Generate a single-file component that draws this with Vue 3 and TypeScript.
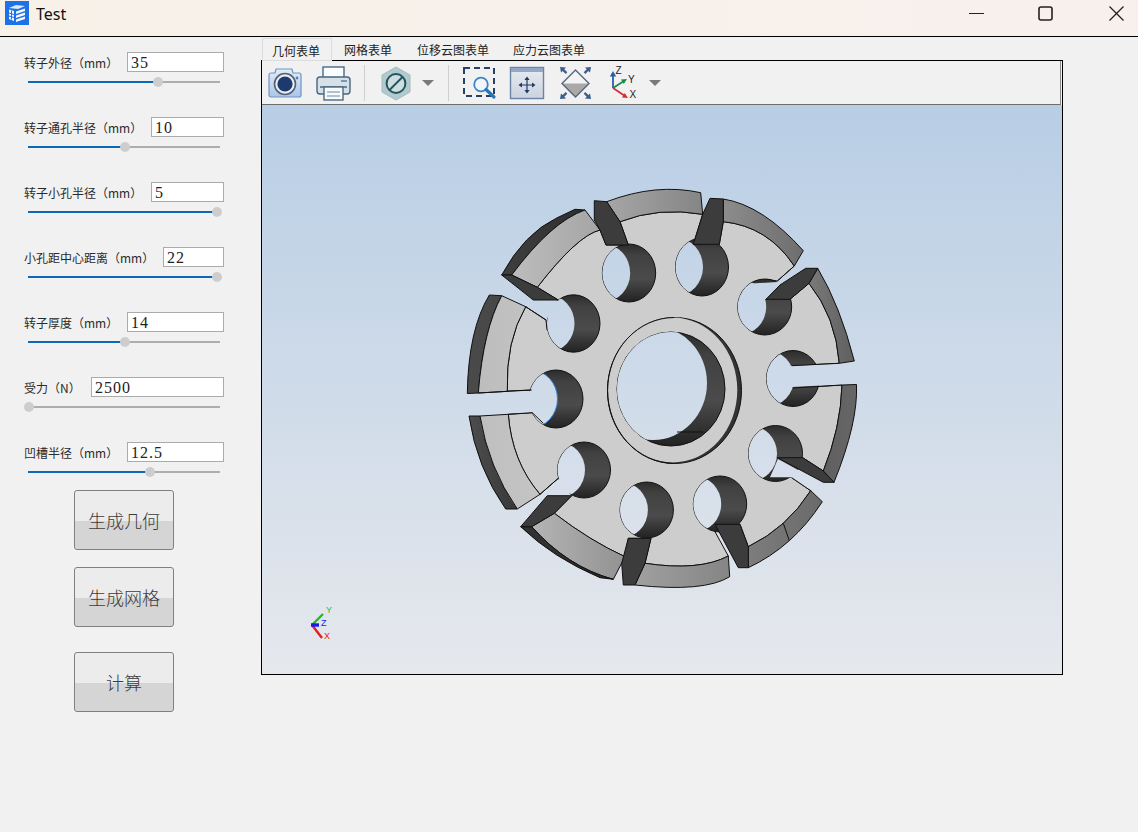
<script setup lang="ts">
type Seg = number[];
// A segment of two numbers is a straight line; of four numbers, a curve through (mx,my) to (x,y).
function shape(segs: Seg[], close = true): string {
  let d = `M${segs[0][0]} ${segs[0][1]}`;
  let cur = segs[0];
  for (const s of segs.slice(1)) {
    if (s.length === 2) {
      d += `L${s[0]} ${s[1]}`;
      cur = s;
    } else {
      const cx = 2 * s[0] - (cur[0] + s[2]) / 2;
      const cy = 2 * s[1] - (cur[1] + s[3]) / 2;
      d += `Q${cx.toFixed(1)} ${cy.toFixed(1)} ${s[2]} ${s[3]}`;
      cur = [s[2], s[3]];
    }
  }
  return d + (close ? "Z" : "");
}

const params = [
  { label: "转子外径（mm）", value: "35", inputWidth: 97, thumb: 130 },
  { label: "转子通孔半径（mm）", value: "10", inputWidth: 73, thumb: 97 },
  { label: "转子小孔半径（mm）", value: "5", inputWidth: 73, thumb: 189 },
  { label: "小孔距中心距离（mm）", value: "22", inputWidth: 61, thumb: 189 },
  { label: "转子厚度（mm）", value: "14", inputWidth: 97, thumb: 97 },
  { label: "受力（N）", value: "2500", inputWidth: 133, thumb: 1 },
  { label: "凹槽半径（mm）", value: "12.5", inputWidth: 97, thumb: 122 },
];

const buttons = [
  { text: "生成几何", cls: "b1" },
  { text: "生成网格", cls: "b2" },
  { text: "计算", cls: "b3" },
];

const tabs = ["几何表单", "网格表单", "位移云图表单", "应力云图表单"];

const face = shape([
  [620, 221.7], [660, 212.3, 702.7, 214.3], [693.3, 244.3], [702, 267], [719.3, 244.3], [723.3, 221.7],
  [763.3, 235, 794.3, 266], [777.3, 281], [766.7, 279.3], [764, 307], [790, 299.3], [809, 283.3],
  [830, 320, 839.3, 363.3], [791.7, 365.7], [793, 378], [793, 388], [842, 385],
  [836.7, 428, 823.3, 471], [802.7, 457.7], [777.3, 457.7], [775, 470], [791.7, 477.7], [810.7, 490.7],
  [783.3, 523.3, 748.3, 546.7], [740, 524.3], [715, 524.3], [715, 531.7], [728.3, 556],
  [693, 565.5, 645, 563.3], [651, 538.3], [628.3, 538.3], [625, 556.7], [590, 538, 554.3, 513.3],
  [571.7, 495.7], [575, 480], [558.3, 478.3], [540, 494.3], [518, 458, 508.3, 414.3], [532.3, 412.7],
  [543.3, 423.3], [556, 400], [531.7, 390], [507.3, 391], [511, 345, 525.7, 306.7], [546, 320], [547, 330],
  [574, 320], [558.3, 300], [537.3, 287.3], [573, 247, 600, 230], [606, 245], [628.3, 245],
]);

const bands = [
  { from: "#3f3f3f", to: "#2e2e2e", pts: [[501.7, 275], [526.7, 240, 556.7, 218], [575, 209.3], [585, 210], [550, 232, 511.7, 275]] },
  { from: "#bdbdbd", to: "#a5a5a5", pts: [[585, 210], [600, 230], [573, 247, 537.3, 287.3], [511.7, 275], [550, 232, 585, 210]] },
  { from: "#a6a6a6", to: "#858585", pts: [[606.7, 201.7], [655, 190, 700.7, 192.7], [702.7, 214.3], [660, 212.3, 620, 221.7]] },
  { from: "#8c8c8c", to: "#6e6e6e", pts: [[723.3, 199], [763, 215, 803.3, 250.7], [794.3, 266], [763.3, 235, 723.3, 221.7]] },
  { from: "#7a7a7a", to: "#5f5f5f", pts: [[817.7, 268.3], [838, 310, 854.3, 361], [839.3, 363.3], [830, 320, 809, 283.3]] },
  { from: "#606060", to: "#666666", pts: [[842, 385], [856.5, 384.5], [851.7, 428, 834, 482.3], [823.3, 471], [836.7, 428, 842, 385]] },
  { from: "#7d7d7d", to: "#6a6a6a", pts: [[810.7, 490.7], [822.3, 501.7], [789.3, 540.7, 748.3, 567.7], [748.3, 546.7], [783.3, 523.3, 810.7, 490.7]] },
  { from: "#a0a0a0", to: "#858585", pts: [[728.3, 556], [729.7, 576.7], [693.3, 586.7, 635, 585], [645, 563.3], [693, 565.5, 728.3, 556]] },
  { from: "#b4b4b4", to: "#929292", pts: [[554.3, 513.3], [590, 538, 625, 556.7], [613.3, 579.3], [570, 560, 531.7, 526.7]] },
  { from: "#333333", to: "#2a2a2a", pts: [[520.7, 526.7], [531.7, 526.7], [570, 560, 613.3, 579.3], [600, 577.7], [556.7, 555, 520.7, 526.7]] },
  { from: "#4d4d4d", to: "#383838", pts: [[469, 416], [480, 416], [493.5, 465, 517.3, 509], [505.7, 509], [482, 465, 469, 416]] },
  { from: "#bfbfbf", to: "#c4c4c4", pts: [[480, 416], [508.3, 414.3], [518, 458, 540, 494.3], [517.3, 509], [493.5, 465, 480, 416]] },
  { from: "#4a4a4a", to: "#474747", pts: [[489.3, 295], [501.7, 295.7], [486.7, 337, 478.3, 393], [467.3, 393.5], [473.3, 337, 489.3, 295]] },
  { from: "#bdbdbd", to: "#c2c2c2", pts: [[501.7, 295.7], [525.7, 306.7], [511, 345, 507.3, 391.3], [478.3, 393], [486.7, 337, 501.7, 295.7]] },
].map((b, i) => ({ id: `band-${i}`, from: b.from, to: b.to, d: shape(b.pts) }));

const holes = [
  [629, 273, 26.7, 29],
  [702, 267, 26.5, 29],
  [764.7, 307, 27, 28],
  [793, 378.5, 26.5, 28],
  [775.5, 453.5, 27, 28],
  [720, 504, 26.7, 28],
  [646.7, 510, 26.7, 28],
  [584, 470, 26.5, 28],
  [556, 399, 27, 29],
  [573.5, 323.5, 26.5, 28.7],
].map((h, i) => ({ id: `hole-${i}`, cx: h[0], cy: h[1], rx: h[2], ry: h[3], back: h[0] - 25.5 }));

const gaps = [
  [[777.3, 282], [794.3, 267], [805.7, 268.6], [780, 285], [766, 299], [752, 299], [752, 283.5]],
  [[781, 366.2], [840, 363.8], [842, 384.6], [781, 387.6]],
  [[778, 459], [822, 483], [808, 489], [791, 477.2], [770, 477.2]],
  [[559, 479], [542, 494.6], [570, 495], [567, 486]],
  [[515, 391.5], [541, 391], [541, 412], [515, 413.4]],
  [[546.6, 319], [557.6, 300.6], [545, 300.6], [535, 311]],
].map((g) => shape(g));

const edges = [
  [[791.7, 365.7], [839.3, 363.3]],
  [[793, 388], [842, 385]],
  [[791.7, 477.7], [810.7, 490.7]],
  [[558.3, 478.3], [540, 494.3]],
  [[546, 320], [525.7, 306.7]],
  [[777.3, 281], [794.3, 266]],
  [[783.3, 523.3], [789.3, 540.7]],
  [[531.7, 390], [478.3, 393]],
  [[508.3, 414.3], [532.3, 412.7], [543.3, 423.3]],
].map((e) => shape(e, false));

const walls = [
  [[501.7, 275], [511.7, 275], [537.3, 287.3], [558.3, 300], [533.3, 300]],
  [[594.3, 200.7], [606.7, 201.7], [620, 221.7], [628.3, 245], [606, 245], [600, 230], [594.3, 220]],
  [[710, 198.3], [723.3, 199], [723.3, 221.7], [719.3, 244.3], [693.3, 244.3], [702.7, 214.3]],
  [[805.7, 268.3], [817.7, 268.3], [809, 283.3], [790, 299.3], [766, 299.3], [780, 285]],
  [[777.3, 457.7], [802.7, 457.7], [823.3, 471], [834, 482.3], [823.3, 482.3]],
  [[740, 524.3], [748.3, 546.7], [748.3, 567.7], [738.3, 567.7], [715, 524.3]],
  [[628.3, 538.3], [651, 538.3], [645, 563.3], [635, 585], [623.3, 585], [621.7, 563.3]],
  [[520.7, 526.7], [547.3, 495.7], [571.7, 495.7], [554.3, 513.3], [531.7, 526.7]],
].map((w) => shape(w));
</script>

<template>
  <div class="window">
    <header class="titlebar">
      <svg class="app-icon" viewBox="0 0 24 24">
        <rect width="24" height="24" fill="#1c72e6" />
        <path d="M4 7l7-3 9 1-7 3z" fill="#dcebfb" />
        <path d="M4 8.5l5 1.6v10L4 18z" fill="#f4f9ff" />
        <path d="M4 12l5 1.5M4 15l5 1.5M6.5 9.5v9" stroke="#1c72e6" stroke-width="1" fill="none" />
        <path d="M11 10.5l9-3v2.6l-9 3zM11 14.5l9-3v2.6l-9 3zM11 18.5l9-3v2.6l-9 3z" fill="#f4f9ff" />
      </svg>
      <span class="app-title">Test</span>
      <div class="controls">
        <svg class="ctl" viewBox="0 0 15 15"><path d="M0 7.5h15" stroke="#222" stroke-width="1" /></svg>
        <svg class="ctl max" viewBox="0 0 15 15"><rect x="1" y="1" width="13" height="13" rx="2" fill="none" stroke="#222" stroke-width="1.6" /></svg>
        <svg class="ctl close" viewBox="0 0 15 15"><path d="M0.5 0.5l14 14M14.5 0.5l-14 14" stroke="#222" stroke-width="1.3" /></svg>
      </div>
    </header>

    <div class="body">
      <aside class="side">
        <div v-for="p in params" :key="p.label" class="param">
          <div class="param-head">
            <label class="param-label">{{ p.label }}</label>
            <input class="param-input" :style="{ width: p.inputWidth + 'px' }" :value="p.value" readonly />
          </div>
          <div class="slider">
            <div class="slider-fill" :style="{ width: p.thumb + 'px' }"></div>
            <div class="slider-thumb" :style="{ left: p.thumb - 5 + 'px' }"></div>
          </div>
        </div>
        <button v-for="b in buttons" :key="b.text" class="action" :class="b.cls">{{ b.text }}</button>
      </aside>

      <main class="main">
        <nav class="tabs">
          <span v-for="(t, i) in tabs" :key="t" class="tab" :class="{ active: i === 0 }">{{ t }}</span>
        </nav>
        <section class="frame">
          <div class="toolbar">
            <!-- camera -->
            <svg class="tool" viewBox="0 0 36 36">
              <defs>
                <linearGradient id="cam" x1="0" y1="0" x2="0" y2="1">
                  <stop offset="0" stop-color="#e2ecf8" />
                  <stop offset="1" stop-color="#a9c5e8" />
                </linearGradient>
              </defs>
              <path d="M4 8h4l1-4h16l1 4h6a2 2 0 0 1 2 2v20a2 2 0 0 1-2 2H4a2 2 0 0 1-2-2V10a2 2 0 0 1 2-2z" fill="url(#cam)" stroke="#6f95c2" stroke-width="1.2" />
              <circle cx="18" cy="19" r="10.5" fill="#e8eef6" stroke="#56606e" stroke-width="1.6" />
              <circle cx="18" cy="19" r="7.6" fill="#1d3a70" />
              <circle cx="30" cy="13" r="1.4" fill="#5f7ea8" />
            </svg>
            <!-- printer -->
            <svg class="tool" viewBox="0 0 36 36">
              <rect x="8" y="2" width="21" height="12" fill="#fbfcfd" stroke="#4a6a85" stroke-width="1.4" />
              <rect x="2" y="12" width="33" height="17" rx="3" fill="#d6e0e9" stroke="#48657f" stroke-width="1.4" />
              <path d="M26 16h6" stroke="#5f7d98" stroke-width="1.5" />
              <path d="M5 22h27" stroke="#3d5d79" stroke-width="1.4" />
              <rect x="9" y="22" width="19" height="13" fill="#f7f9fb" stroke="#4a6a85" stroke-width="1.4" />
              <path d="M12 27h13M12 31h13" stroke="#6f8aa1" stroke-width="1.2" />
            </svg>
            <span class="sep"></span>
            <!-- section hexagon -->
            <svg class="tool tool-menu" viewBox="0 0 36 36">
              <path d="M18 2l14 8v17l-14 8-14-8V10z" fill="#b3cacd" stroke="#a3bcbf" stroke-width="1" />
              <circle cx="18" cy="18.5" r="9.4" fill="#cfdde0" stroke="#1f5560" stroke-width="2" />
              <path d="M11.5 25l13-13" stroke="#1f5560" stroke-width="2" />
            </svg>
            <svg class="caret" viewBox="0 0 12 6"><path d="M0 0h12l-6 6z" fill="#7a7a7a" /></svg>
            <span class="sep sep2"></span>
            <!-- zoom window -->
            <svg class="tool" viewBox="0 0 36 36">
              <rect x="3" y="3" width="30" height="28" fill="none" stroke="#2a3f66" stroke-width="2" stroke-dasharray="6 4" />
              <circle cx="20" cy="19.5" r="6.8" fill="#f1f4f8" stroke="#3a86c8" stroke-width="1.8" />
              <path d="M25 24.5l8 7.5" stroke="#2277bb" stroke-width="3.2" stroke-linecap="round" />
            </svg>
            <!-- fit window -->
            <svg class="tool t-wide" viewBox="0 0 36 36">
              <defs>
                <linearGradient id="fitg" x1="0" y1="0" x2="0" y2="1">
                  <stop offset="0" stop-color="#e8ebf1" />
                  <stop offset="1" stop-color="#cbd3e0" />
                </linearGradient>
              </defs>
              <rect x="1.5" y="2.5" width="33" height="31" fill="url(#fitg)" stroke="#6b83a5" stroke-width="1.4" />
              <rect x="2" y="3" width="32" height="4" fill="#93a8c8" />
              <path d="M18 13v14M11 20h14" stroke="#1f3a66" stroke-width="1.2" />
              <path d="M18 11.5l-2.6 3.5h5.2zM18 28.5l-2.6-3.5h5.2zM9.5 20l3.5-2.6v5.2zM26.5 20l-3.5-2.6v5.2z" fill="#1f3a66" />
            </svg>
            <!-- zoom fit diamond -->
            <svg class="tool" viewBox="0 0 36 36">
              <path d="M18.5 5l13.5 13.5h-27z" fill="#f3f3f3" />
              <path d="M5 18.5h27l-13.5 13.5z" fill="#a9a9a9" />
              <path d="M18.5 5l13.5 13.5-13.5 13.5-13.5-13.5z" fill="none" stroke="#55677f" stroke-width="1.4" />
              <path d="M3 2l6 .6-1.7 1.7 3 3-1.6 1.6-3-3L4 7.6zM34 2l-6 .6 1.7 1.7-3 3 1.6 1.6 3-3L33 7.6zM3 34l6-.6-1.7-1.7 3-3-1.6-1.6-3 3L4 28.4zM34 34l-6-.6 1.7-1.7-3-3 1.6-1.6 3 3 1.7-1.7z" fill="#3d5e8c" />
            </svg>
            <!-- axes -->
            <svg class="tool tool-menu t-wide" viewBox="0 0 36 36">
              <path d="M8 23V10" stroke="#2a5ea8" stroke-width="1.8" />
              <path d="M8 6l-3.2 5.5h6.4z" fill="#2a5ea8" />
              <path d="M8 23l11-7" stroke="#1e8a4a" stroke-width="1.8" />
              <path d="M22 14l-6 .4 2.8 4.6z" fill="#1e8a4a" />
              <path d="M8 23l12 8" stroke="#d03030" stroke-width="1.8" />
              <path d="M23 33l-6-.4 2.8-4.6z" fill="#d03030" />
              <text x="10.5" y="8.5" class="axis-label">Z</text>
              <text x="23" y="18" class="axis-label">Y</text>
              <text x="24.5" y="33" class="axis-label">X</text>
            </svg>
            <svg class="caret" viewBox="0 0 12 6"><path d="M0 0h12l-6 6z" fill="#7a7a7a" /></svg>
          </div>

          <svg class="viewport" viewBox="262 105 800 569">
            <defs>
              <linearGradient id="bg" gradientUnits="userSpaceOnUse" x1="0" y1="105" x2="0" y2="674">
                <stop offset="0" stop-color="#b8cee5" />
                <stop offset="1" stop-color="#e6e8ed" />
              </linearGradient>
              <linearGradient id="wall" x1="0" y1="0" x2="0" y2="1">
                <stop offset="0" stop-color="#2c2c2c" />
                <stop offset="0.2" stop-color="#414141" />
                <stop offset="0.6" stop-color="#4b4b4b" />
                <stop offset="1" stop-color="#222222" />
              </linearGradient>
              <linearGradient v-for="b in bands" :id="b.id" :key="b.id" x1="0" y1="0" x2="1" y2="0">
                <stop offset="0" :stop-color="b.from" />
                <stop offset="1" :stop-color="b.to" />
              </linearGradient>
              <clipPath id="bore-clip"><ellipse cx="671" cy="389" rx="54" ry="57" /></clipPath>
              <clipPath v-for="h in holes" :id="h.id" :key="h.id">
                <ellipse :cx="h.cx" :cy="h.cy" :rx="h.rx" :ry="h.ry" />
              </clipPath>
            </defs>

            <rect x="262" y="105" width="800" height="569" fill="url(#bg)" />

            <path class="line" :d="face" fill="#cdcdcd" />
            <path v-for="b in bands" :key="b.id" class="line" :d="b.d" :fill="`url(#${b.id})`" />

            <!-- central boss and bore -->
            <ellipse cx="674.5" cy="390.5" rx="67" ry="73" fill="#333" class="line" />
            <ellipse cx="672.7" cy="390" rx="64.6" ry="72.4" fill="#cdcdcd" />
            <path class="line" d="M607.5 390.5a67 73 0 0 1 67-73" fill="none" />
            <path class="line" d="M607.5 390.5a67 73 0 0 0 67 73" fill="none" />
            <ellipse cx="671" cy="389" rx="54" ry="57" fill="url(#wall)" class="line" />
            <ellipse cx="653" cy="383" rx="54" ry="57" fill="url(#bg)" clip-path="url(#bore-clip)" />
            <path d="M677 432h26" class="line" fill="none" />

            <g v-for="h in holes" :key="h.id">
              <ellipse :cx="h.cx" :cy="h.cy" :rx="h.rx" :ry="h.ry" fill="url(#wall)" class="line" />
              <ellipse :cx="h.back" :cy="h.cy" :rx="h.rx" :ry="h.ry" fill="url(#bg)" :clip-path="`url(#${h.id})`" />
            </g>
            <!-- selection tint on the left hole -->
            <ellipse :cx="holes[8].back" :cy="holes[8].cy" :rx="holes[8].rx" :ry="holes[8].ry" fill="none" stroke="#2f80e0" stroke-width="1" clip-path="url(#hole-8)" />

            <path v-for="(g, i) in gaps" :key="'g' + i" :d="g" fill="url(#bg)" />
            <path v-for="(e, i) in edges" :key="'e' + i" :d="e" class="line" fill="none" />
            <path v-for="(w, i) in walls" :key="'w' + i" :d="w" class="line" fill="#3c3c3c" />

            <!-- orientation triad -->
            <path d="M312 625l11-11" stroke="#22bb22" stroke-width="2.4" />
            <path d="M312 625l10 13" stroke="#e02020" stroke-width="2.4" />
            <path d="M311 625h8" stroke="#1a1aee" stroke-width="3.4" />
            <text x="326" y="613" class="triad" fill="#33bb33">Y</text>
            <text x="321" y="626" class="triad" fill="#1a1aee">Z</text>
            <text x="324" y="639" class="triad" fill="#e02020">X</text>
          </svg>
        </section>
      </main>
    </div>
  </div>
</template>

<style>
html,
body {
  margin: 0;
  background: #f1f1f1;
}
</style>

<style scoped>
.window {
  width: 1138px;
  height: 832px;
  overflow: hidden;
  background: #f1f1f1;
  font-family: "Noto Sans CJK SC", "Noto Sans", sans-serif;
  color: #222;
}
.titlebar {
  box-sizing: border-box;
  height: 37px;
  display: flex;
  align-items: flex-start;
  padding: 1px 14px 0 5px;
  background: linear-gradient(90deg, #f8f1e8, #f7f0ed);
  border-bottom: 1px solid #000;
}
.app-icon {
  width: 24px;
  height: 24px;
  flex: none;
}
.app-title {
  margin-left: 7px;
  font: 16px/26px "Noto Sans", sans-serif;
  color: #111;
}
.controls {
  margin-left: auto;
  margin-top: 5px;
  display: flex;
}
.ctl {
  width: 15px;
  height: 15px;
  display: block;
}
.max {
  margin-left: 54px;
}
.close {
  margin-left: 56px;
}
.body {
  display: flex;
}
.side {
  box-sizing: border-box;
  width: 261px;
  flex: none;
  padding: 15px 0 0 24px;
}
.param {
  width: 200px;
  height: 65px;
}
.param:nth-child(7) {
  height: 35px;
}
.param-head {
  display: flex;
  justify-content: space-between;
  align-items: center;
  height: 20px;
}
.param-label {
  padding-top: 2px;
  font-size: 12px;
  line-height: 20px;
  color: #2a2a2a;
  white-space: nowrap;
}
.param-input {
  box-sizing: border-box;
  height: 20px;
  padding: 2px 3px 0 3px;
  border: 1px solid #ababab;
  border-radius: 0;
  outline: none;
  background: #fff;
  font: 16px/17px "Liberation Serif", serif;
  letter-spacing: 1px;
  color: #222;
}
.slider {
  position: relative;
  width: 192px;
  height: 2px;
  margin: 9px 0 0 4px;
  background: #adadad;
}
.slider-fill {
  height: 2px;
  background: #0e68b8;
}
.slider-thumb {
  position: absolute;
  top: -4px;
  width: 10px;
  height: 10px;
  border-radius: 50%;
  background: #cdcdcd;
}
.action {
  display: block;
  box-sizing: border-box;
  width: 100px;
  height: 60px;
  margin-left: 50px;
  padding: 0;
  border: 1px solid #808080;
  border-radius: 3px;
  background: linear-gradient(#ececec 0, #ececec 51%, #d5d5d5 52%, #d5d5d5 100%);
  font: 300 18px "Noto Sans CJK SC", sans-serif;
  color: #3c3c3c;
}
.b1 {
  margin-top: 13px;
}
.b2 {
  margin-top: 17px;
}
.b3 {
  margin-top: 25px;
}
.main {
  flex: none;
  width: 802px;
  padding-top: 1px;
}
.tabs {
  display: flex;
  height: 22px;
  padding-left: 1px;
}
.tab {
  padding: 0 12px;
  font-size: 12px;
  line-height: 24px;
  color: #222;
  white-space: nowrap;
}
.tab:nth-child(2) {
  padding-right: 13px;
}
.tab.active {
  box-sizing: border-box;
  position: relative;
  height: 23px;
  padding: 0 11px 0 9px;
  border: 1px solid #dcdcdc;
  background: #f1f1f1;
}
.frame {
  box-sizing: border-box;
  width: 802px;
  height: 615px;
  border: 1px solid #000;
  background: #f1f1f1;
}
.toolbar {
  box-sizing: border-box;
  height: 44px;
  display: flex;
  align-items: center;
  padding: 0 0 0 5px;
  border-bottom: 1px solid #6e6e6e;
  border-right: 1px solid #8a8a8a;
  margin-right: 1px;
}
.tool {
  width: 36px;
  height: 36px;
  flex: none;
  margin-right: 12px;
}
.tool-menu {
  margin-right: 8px;
}
.t-wide {
  margin-right: 12px;
}
.tool-menu.t-wide {
  margin-right: 8px;
}
.sep {
  width: 1px;
  height: 36px;
  margin: 0 13px 0 1px;
  background: #cfcfcf;
}
.sep2 {
  margin: 0 12px 0 14px;
}
.caret {
  width: 12px;
  height: 6px;
  flex: none;
}
.viewport {
  display: block;
  width: 800px;
  height: 569px;
}
.line {
  stroke: #111;
  stroke-width: 1;
  stroke-linejoin: round;
}
.axis-label {
  font: 10px "Liberation Sans", sans-serif;
  fill: #222;
}
.triad {
  font: 9px "Liberation Sans", sans-serif;
}
</style>
